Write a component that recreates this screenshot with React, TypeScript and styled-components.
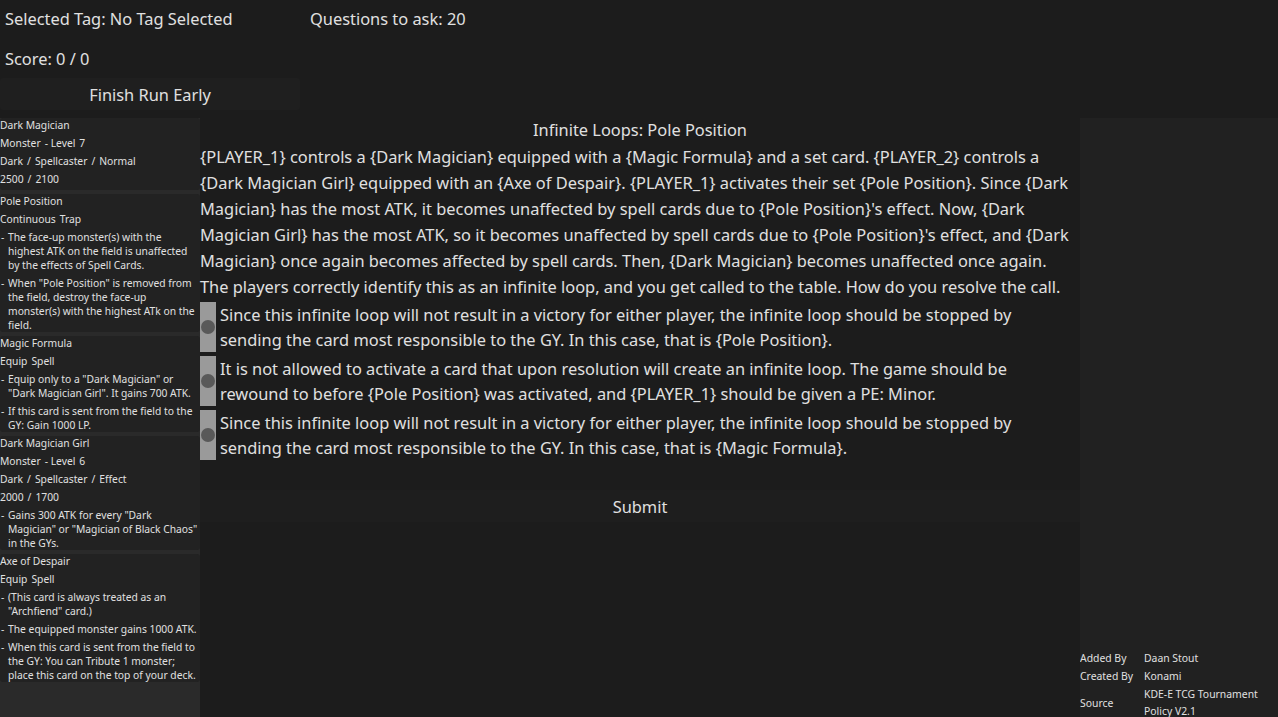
import React from "react";
import styled, { createGlobalStyle } from "styled-components";

const Global = createGlobalStyle`
  html, body { margin: 0; padding: 0; background: #1c1c1c; }
  body { font-family: "Noto Sans", "Open Sans", sans-serif; color: #e0e0e0; overflow: hidden; }
  * { box-sizing: border-box; }
`;

const Page = styled.div`
  width: 1278px;
  height: 717px;
  display: flex;
  flex-direction: column;
  overflow: hidden;
`;

const Header = styled.div`
  display: grid;
  grid-template-columns: 305px 1fr;
  grid-template-rows: 36px 36px 30px;
  row-gap: 4px;
  font-size: 16.4px;
`;

const HeaderText = styled.div`
  display: flex;
  align-items: center;
  padding-left: 5px;
  white-space: nowrap;
`;

const FinishButton = styled.button`
  grid-column: 1 / 2;
  width: 300px;
  margin-top: -2px;
  border: none;
  border-radius: 3px;
  background: #1f1f1f;
  color: #e0e0e0;
  font-family: inherit;
  font-size: 16.4px;
  padding: 0;
`;

const Body = styled.div`
  flex: 1;
  display: grid;
  grid-template-columns: 200px 880px 198px;
  margin-top: 8px;
  min-height: 0;
`;

const LeftPanel = styled.div`
  background: #2a2a2a;
  display: flex;
  flex-direction: column;
  gap: 4px;
  overflow: hidden;
`;

const Card = styled.div`
  background: #222222;
  border-radius: 3px;
  display: flex;
  flex-direction: column;
  gap: 4px;
  font-size: 10.3px;
  line-height: 14px;
`;

const CardLine = styled.div`
  display: flex;
  gap: 4px;
  white-space: nowrap;
`;

const Effects = styled.div`
  display: flex;
  flex-direction: column;
  gap: 4px;
`;

const Effect = styled.div`
  display: grid;
  grid-template-columns: 8px 1fr;
`;

const Dash = styled.span`
  padding-left: 1px;
`;

const Center = styled.div`
  display: flex;
  flex-direction: column;
  min-width: 0;
`;

const Title = styled.div`
  text-align: center;
  font-size: 16.4px;
  line-height: 24px;
`;

const Paragraph = styled.div`
  font-size: 16.4px;
  line-height: 26px;
  margin: 2px 6px 2px 0;
`;

const Options = styled.div`
  display: flex;
  flex-direction: column;
  gap: 4px;
`;

const OptionRow = styled.label`
  display: flex;
  align-items: stretch;
  gap: 4px;
  height: 50px;
`;

const RadioBox = styled.span`
  flex: 0 0 16px;
  background: #9a9a9a;
  display: flex;
  align-items: center;
  justify-content: center;
`;

const RadioDot = styled.span`
  width: 14px;
  height: 14px;
  border-radius: 50%;
  background: #595959;
`;

const OptionText = styled.span`
  font-size: 16.4px;
  line-height: 25px;
  margin-right: 6px;
`;

const SubmitButton = styled.button`
  margin-top: 30px;
  height: 32px;
  border: none;
  background: #1e1e1e;
  color: #e0e0e0;
  font-family: inherit;
  font-size: 16.4px;
`;

const RightPanel = styled.div`
  background: #212121;
  display: flex;
  flex-direction: column;
  justify-content: flex-end;
  overflow: hidden;
`;

const Info = styled.div`
  display: grid;
  grid-template-columns: 64px 1fr;
  row-gap: 1px;
  font-size: 10.4px;
  line-height: 17px;
  margin-bottom: -3px;
`;

const InfoLabel = styled.div`
  display: flex;
  align-items: center;
`;

const InfoValue = styled.div``;

type CardData = {
  name: string;
  lines: string[][];
  effects: string[];
};

const cards: CardData[] = [
  {
    name: "Dark Magician",
    lines: [["Monster", "- Level", "7"], ["Dark", "/", "Spellcaster", "/", "Normal"], ["2500", "/", "2100"]],
    effects: [],
  },
  {
    name: "Pole Position",
    lines: [["Continuous", "Trap"]],
    effects: [
      "The face-up monster(s) with the highest ATK on the field is unaffected by the effects of Spell Cards.",
      'When "Pole Position" is removed from the field, destroy the face-up monster(s) with the highest ATk on the field.',
    ],
  },
  {
    name: "Magic Formula",
    lines: [["Equip", "Spell"]],
    effects: [
      'Equip only to a "Dark Magician" or "Dark Magician Girl". It gains 700 ATK.',
      "If this card is sent from the field to the GY: Gain 1000 LP.",
    ],
  },
  {
    name: "Dark Magician Girl",
    lines: [["Monster", "- Level", "6"], ["Dark", "/", "Spellcaster", "/", "Effect"], ["2000", "/", "1700"]],
    effects: ['Gains 300 ATK for every "Dark Magician" or "Magician of Black Chaos" in the GYs.'],
  },
  {
    name: "Axe of Despair",
    lines: [["Equip", "Spell"]],
    effects: [
      '(This card is always treated as an "Archfiend" card.)',
      "The equipped monster gains 1000 ATK.",
      "When this card is sent from the field to the GY: You can Tribute 1 monster; place this card on the top of your deck.",
    ],
  },
];

const options = [
  "Since this infinite loop will not result in a victory for either player, the infinite loop should be stopped by sending the card most responsible to the GY. In this case, that is {Pole Position}.",
  "It is not allowed to activate a card that upon resolution will create an infinite loop. The game should be rewound to before {Pole Position} was activated, and {PLAYER_1} should be given a PE: Minor.",
  "Since this infinite loop will not result in a victory for either player, the infinite loop should be stopped by sending the card most responsible to the GY. In this case, that is {Magic Formula}.",
];

export default function App() {
  return (
    <>
      <Global />
      <Page>
        <Header>
          <HeaderText>Selected Tag: No Tag Selected</HeaderText>
          <HeaderText>Questions to ask: 20</HeaderText>
          <HeaderText>Score: 0 / 0</HeaderText>
          <div />
          <FinishButton>Finish Run Early</FinishButton>
        </Header>
        <Body>
          <LeftPanel>
            {cards.map((c) => (
              <Card key={c.name}>
                <CardLine>{c.name}</CardLine>
                {c.lines.map((l, i) => (
                  <CardLine key={i}>
                    {l.map((p, j) => (
                      <span key={j}>{p}</span>
                    ))}
                  </CardLine>
                ))}
                <Effects>
                  {c.effects.map((e, i) => (
                    <Effect key={i}>
                      <Dash>-</Dash>
                      <span>{e}</span>
                    </Effect>
                  ))}
                </Effects>
              </Card>
            ))}
          </LeftPanel>
          <Center>
            <Title>Infinite Loops: Pole Position</Title>
            <Paragraph>
              {"{PLAYER_1} controls a {Dark Magician} equipped with a {Magic Formula} and a set card. {PLAYER_2} controls a {Dark Magician Girl} equipped with an {Axe of Despair}. {PLAYER_1} activates their set {Pole Position}. Since {Dark Magician} has the most ATK, it becomes unaffected by spell cards due to {Pole Position}'s effect. Now, {Dark Magician Girl} has the most ATK, so it becomes unaffected by spell cards due to {Pole Position}'s effect, and {Dark Magician} once again becomes affected by spell cards. Then, {Dark Magician} becomes unaffected once again. The players correctly identify this as an infinite loop, and you get called to the table. How do you resolve the call."}
            </Paragraph>
            <Options>
              {options.map((o, i) => (
                <OptionRow key={i}>
                  <RadioBox>
                    <RadioDot />
                  </RadioBox>
                  <OptionText>{o}</OptionText>
                </OptionRow>
              ))}
            </Options>
            <SubmitButton>Submit</SubmitButton>
          </Center>
          <RightPanel>
            <Info>
              <InfoLabel>Added By</InfoLabel>
              <InfoValue>Daan Stout</InfoValue>
              <InfoLabel>Created By</InfoLabel>
              <InfoValue>Konami</InfoValue>
              <InfoLabel>Source</InfoLabel>
              <InfoValue>
                KDE-E TCG Tournament
                <br />
                Policy V2.1
              </InfoValue>
            </Info>
          </RightPanel>
        </Body>
      </Page>
    </>
  );
}
